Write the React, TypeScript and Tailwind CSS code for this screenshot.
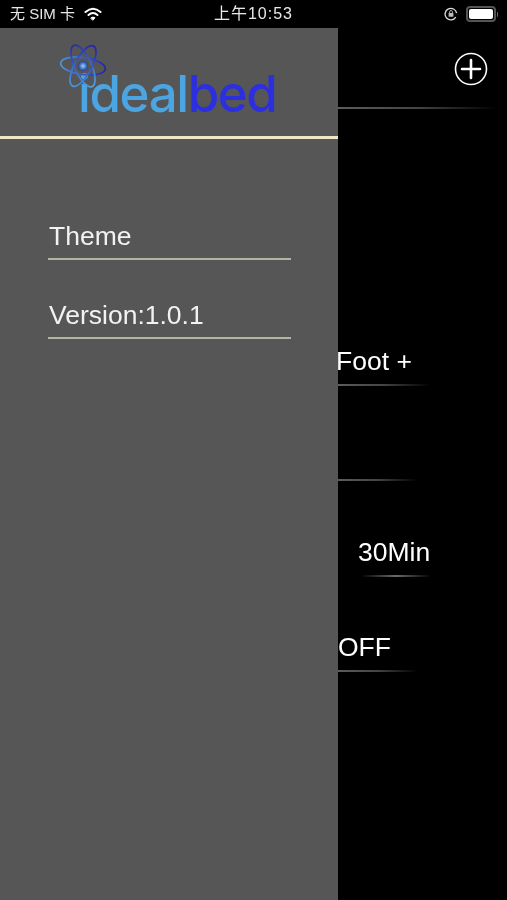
import React from "react";

function Wifi() {
  return (
    <svg width="18" height="14" viewBox="0 0 18 14" fill="none" stroke="#fff" strokeLinecap="round">
      <path d="M1.5 5 Q9 -1.5 16.5 5" strokeWidth="2" />
      <path d="M4.5 8 Q9 4 13.5 8" strokeWidth="2" />
      <path d="M7 10.8 Q9 9.2 11 10.8 L9 13 Z" fill="#fff" strokeWidth="1" />
    </svg>
  );
}

function OrientationLock() {
  return (
    <svg width="14" height="14" viewBox="0 0 14 14" fill="none">
      <path d="M11.8 10.2 A5.8 5.8 0 1 1 12.6 6.2" stroke="#ddd" strokeWidth="1.3" />
      <rect x="4.6" y="6" width="4.8" height="3.8" rx="0.6" fill="#bbb" />
      <path d="M5.6 6 V4.9 a1.4 1.4 0 0 1 2.8 0 V6" stroke="#bbb" strokeWidth="0.9" />
    </svg>
  );
}

function Battery() {
  return (
    <div className="flex items-center">
      <div className="w-[30px] h-[16px] rounded-[4px] border-2 border-[#555555] p-[1px]">
        <div className="w-full h-full rounded-[2px] bg-white" />
      </div>
      <div className="w-[1.5px] h-[5px] ml-[0.5px] rounded-r-sm bg-[#6a6a6a]" />
    </div>
  );
}

function StatusBar() {
  return (
    <div className="h-[28px] bg-black grid grid-cols-3 items-center text-[15px] font-['Liberation_Sans','Noto_Sans_CJK_SC',sans-serif] text-[#e8e8e8]">
      <div className="flex items-center pl-[10px] gap-[9px]">
        <span className="whitespace-nowrap">无 SIM 卡</span>
        <Wifi />
      </div>
      <div className="text-center whitespace-nowrap text-[16px] tracking-[1px]">上午10:53</div>
      <div className="flex items-center justify-end pr-[9px] gap-[8px]">
        <OrientationLock />
        <Battery />
      </div>
    </div>
  );
}

function Atom() {
  return (
    <svg width="50" height="46" viewBox="0 0 50 46" fill="none" className="absolute left-[59px] top-[16px]">
      <defs>
        <linearGradient id="a" x1="0" x2="1" y1="0" y2="0">
          <stop offset="0" stopColor="#4a94d8" />
          <stop offset="1" stopColor="#2626a8" />
        </linearGradient>
        <linearGradient id="b" x1="0" x2="1" y1="0" y2="0">
          <stop offset="0" stopColor="#28309f" />
          <stop offset="1" stopColor="#4fa0dc" />
        </linearGradient>
        <radialGradient id="n">
          <stop offset="0" stopColor="#a8ccf2" />
          <stop offset="0.6" stopColor="#4478c8" />
          <stop offset="1" stopColor="#2a3a90" />
        </radialGradient>
      </defs>
      <ellipse cx="24" cy="22" rx="22.5" ry="8.5" stroke="url(#a)" strokeWidth="1.8" transform="rotate(8 24 22)" />
      <ellipse cx="24" cy="22" rx="22.5" ry="8.5" stroke="url(#b)" strokeWidth="1.8" transform="rotate(66 24 22)" />
      <ellipse cx="24" cy="22" rx="22.5" ry="8.5" stroke="url(#a)" strokeWidth="1.8" transform="rotate(-62 24 22)" />
      <circle cx="24" cy="22" r="5" fill="url(#n)" />
    </svg>
  );
}

function Logo() {
  return (
    <div className="relative h-[108px]">
      <Atom />
      <div className="pl-[78px] pt-[34px] text-[51px] leading-[64px] tracking-[-1.4px] font-['Inter',sans-serif] font-medium whitespace-nowrap">
        <span className="text-[#4ba5e2]">ideal</span>
        <span className="text-[#2c2fe0]">bed</span>
      </div>
    </div>
  );
}

function MenuItem({ label }: { label: string }) {
  return (
    <div className="border-b-2 border-[#b4b4a0] pb-[6px] pl-[1px] text-[26.5px] leading-[31px] text-[#f2f2f2] font-['Liberation_Sans',sans-serif]">
      {label}
    </div>
  );
}

function Drawer() {
  return (
    <aside className="w-[338px] shrink-0 bg-[#565656] flex flex-col">
      <Logo />
      <div className="h-[2.5px] bg-[#efe7c8]" />
      <div className="flex flex-col gap-[40px] pl-[48px] pr-[47px] pt-[82px]">
        <MenuItem label="Theme" />
        <MenuItem label="Version:1.0.1" />
      </div>
    </aside>
  );
}

function Fade({ w, ml = 0, center = false }: { w: number; ml?: number; center?: boolean }) {
  return (
    <div
      style={{ width: w, marginLeft: ml }}
      className={
        center
          ? "h-[2px] bg-gradient-to-r from-transparent via-[#6a6a6a] to-transparent"
          : "h-[2px] bg-gradient-to-r from-[#5c5c5c] via-[#444444] to-transparent"
      }
    />
  );
}

function Peek() {
  return (
    <main className="flex-1 min-w-0 bg-black text-white flex flex-col font-['Liberation_Sans',sans-serif] text-[26.5px] leading-[30px]">
      <div className="flex justify-end pr-[19px] pt-[24px] h-[79px]">
        <svg width="34" height="34" viewBox="0 0 34 34" fill="none" stroke="#fff" strokeLinecap="round">
          <circle cx="17" cy="17" r="15.5" strokeWidth="1.6" />
          <path d="M8 17 H26 M17 8 V26" strokeWidth="2.6" />
        </svg>
      </div>
      <Fade w={160} />
      <div className="mt-[237px] -ml-[2px] whitespace-nowrap">Foot +</div>
      <div className="mt-[8px]"><Fade w={92} /></div>
      <div className="mt-[93px]"><Fade w={80} /></div>
      <div className="mt-[56px] pl-[20px] whitespace-nowrap">30Min</div>
      <div className="mt-[8px]"><Fade w={70} ml={23} center /></div>
      <div className="mt-[55px] whitespace-nowrap">OFF</div>
      <div className="mt-[8px]"><Fade w={80} /></div>
    </main>
  );
}

export default function App() {
  return (
    <div className="w-[507px] h-[900px] bg-black flex flex-col overflow-hidden blur-[0.35px]">
      <StatusBar />
      <div className="flex flex-1 min-h-0">
        <Drawer />
        <Peek />
      </div>
    </div>
  );
}
